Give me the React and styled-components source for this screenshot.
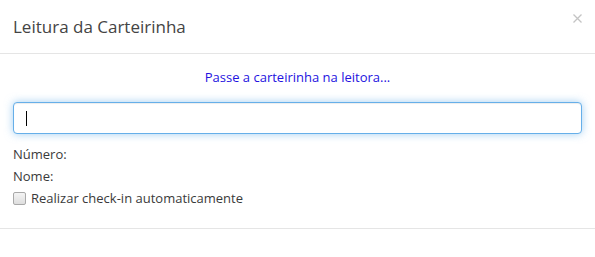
import React from "react";
import styled, { createGlobalStyle } from "styled-components";

const Global = createGlobalStyle`
  html, body { margin: 0; padding: 0; background: #fff; }
  body { font-family: "Open Sans", "Noto Sans", sans-serif; color: #333; }
  * { box-sizing: border-box; }
`;

const Modal = styled.div`
  width: 595px;
  background: #fff;
`;

const Header = styled.div`
  display: flex;
  align-items: flex-start;
  justify-content: space-between;
  padding: 15px 13px 14px 13px;
  border-bottom: 1px solid #e5e5e5;
`;

const Title = styled.h4`
  margin: 0;
  font-size: 17px;
  line-height: 24px;
  font-weight: 400;
  color: #444;
`;

const Close = styled.button`
  border: 0;
  background: none;
  padding: 0;
  margin: -3px -1px 0 0;
  width: 12px;
  height: 12px;
  display: flex;
  align-items: center;
  justify-content: center;
  cursor: pointer;
`;

const Body = styled.div`
  padding: 14px 13px 19px 13px;
  font-size: 13px;
`;

const Prompt = styled.p`
  margin: 0 0 16px 0;
  text-align: center;
  color: #2412e0;
  line-height: 18px;
`;

const Field = styled.div`
  position: relative;
  margin-bottom: 9px;
`;

const Input = styled.input`
  display: block;
  width: 100%;
  height: 32px;
  padding: 6px 12px;
  font: inherit;
  border: 1px solid #66afe9;
  border-radius: 4px;
  outline: 0;
  box-shadow: inset 0 1px 1px rgba(0, 0, 0, 0.075), 0 0 8px rgba(102, 175, 233, 0.6);
  caret-color: transparent;
`;

const Caret = styled.span`
  position: absolute;
  left: 13px;
  top: 9px;
  width: 1px;
  height: 15px;
  background: #000;
`;

const InfoRow = styled.div`
  line-height: 22px;
  color: #3a3a3a;
`;

const CheckRow = styled.label`
  display: flex;
  align-items: center;
  gap: 5px;
  line-height: 22px;
  color: #3a3a3a;
`;

const Box = styled.span`
  width: 13px;
  height: 13px;
  border: 1px solid #a9a9a9;
  border-radius: 2px;
  background: linear-gradient(#f4f4f4, #dedede);
`;

const Footer = styled.div`
  border-top: 1px solid #e5e5e5;
  height: 28px;
`;

export default function App() {
  return (
    <>
      <Global />
      <Modal>
        <Header>
          <Title>Leitura da Carteirinha</Title>
          <Close aria-label="Fechar">
            <svg width="9" height="9" viewBox="0 0 9 9">
              <path d="M0.5 0.5 L8.5 8.5 M8.5 0.5 L0.5 8.5" stroke="#c4c4c4" strokeWidth="1.3" />
            </svg>
          </Close>
        </Header>
        <Body>
          <Prompt>Passe a carteirinha na leitora...</Prompt>
          <Field>
            <Input type="text" />
            <Caret />
          </Field>
          <InfoRow>Número:</InfoRow>
          <InfoRow>Nome:</InfoRow>
          <CheckRow>
            <Box />
            Realizar check-in automaticamente
          </CheckRow>
        </Body>
        <Footer />
      </Modal>
    </>
  );
}
